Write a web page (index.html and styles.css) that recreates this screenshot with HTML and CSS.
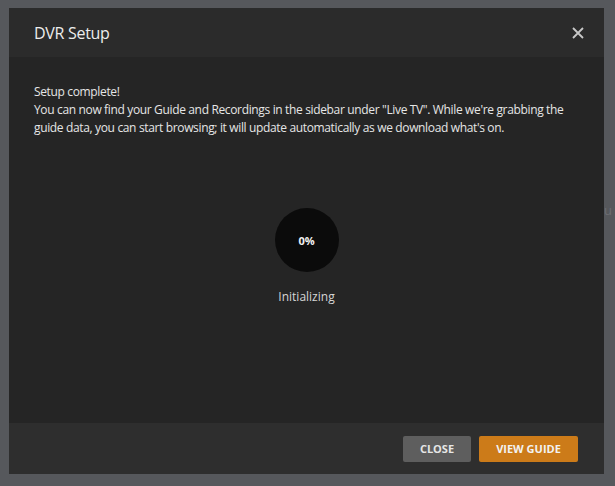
FILE: index.html
```html
<!DOCTYPE html>
<html>
<head>
<meta charset="utf-8">
<link rel="stylesheet" href="styles.css">
</head>
<body>
<div class="page">
  <span class="page-text">You</span>
</div>
<div class="overlay">
  <div class="modal">
    <div class="modal-header">
      <h1 class="modal-title">DVR Setup</h1>
      <button class="close-x" aria-label="Close">
        <svg width="12" height="12" viewBox="0 0 12 12"><path d="M1 1L11 11M11 1L1 11" stroke="#c8c8c8" stroke-width="1.8" fill="none"/></svg>
      </button>
    </div>
    <div class="modal-body">
      <p class="message">Setup complete!<br>You can now find your Guide and Recordings in the sidebar under "Live TV". While we're grabbing the guide data, you can start browsing; it will update automatically as we download what's on.</p>
      <div class="progress">
        <div class="progress-circle">0%</div>
        <div class="progress-label">Initializing</div>
      </div>
    </div>
    <div class="modal-footer">
      <button class="btn btn-secondary">CLOSE</button>
      <button class="btn btn-primary">VIEW GUIDE</button>
    </div>
  </div>
</div>
</body>
</html>
```
FILE: styles.css
```css
html, body {
  margin: 0;
  padding: 0;
  width: 615px;
  height: 486px;
  overflow: hidden;
  background: #56585c;
  font-family: "Open Sans", "Liberation Sans", sans-serif;
}
.page {
  width: 615px;
  height: 486px;
  position: relative;
}
.page-text {
  position: absolute;
  left: 589px;
  top: 201px;
  font-size: 13px;
  color: #6c6e72;
}
.overlay {
  position: absolute;
  left: 0;
  top: 0;
  width: 615px;
  height: 486px;
  padding: 8px 11px 12px 9px;
  box-sizing: border-box;
}
.modal {
  width: 595px;
  height: 466px;
  display: flex;
  flex-direction: column;
  background: #252525;
}
.modal-header {
  height: 49px;
  flex: none;
  background: #2b2b2b;
  display: flex;
  align-items: center;
  justify-content: space-between;
  padding: 0 20px 0 25px;
}
.modal-title {
  margin: 0;
  font-size: 16px;
  font-weight: 500;
  letter-spacing: -0.3px;
  color: #ededed;
  line-height: 1;
  padding-top: 1px;
}
.close-x {
  background: none;
  border: 0;
  padding: 0;
  width: 12px;
  height: 12px;
  display: flex;
  margin-top: 1px;
}
.modal-body {
  flex: 1;
  padding: 26px 25px 0 25px;
  display: flex;
  flex-direction: column;
}
.message {
  margin: 0;
  font-size: 12px;
  letter-spacing: -0.35px;
  line-height: 18px;
  color: #e6e6e6;
}
.progress {
  margin-top: 71px;
  display: flex;
  flex-direction: column;
  align-items: center;
}
.progress-circle {
  width: 64px;
  height: 64px;
  border-radius: 50%;
  background: #0b0b0b;
  color: #f2f2f2;
  font-size: 11px;
  font-weight: 700;
  display: flex;
  align-items: center;
  justify-content: center;
}
.progress-label {
  margin-top: 16px;
  font-size: 12px;
  color: #d6d6d6;
}
.modal-footer {
  height: 51px;
  flex: none;
  background: #2e2e2e;
  display: flex;
  align-items: center;
  justify-content: flex-end;
  gap: 8px;
  padding: 0 26px 0 0;
}
.btn {
  height: 26px;
  border: 0;
  border-radius: 2px;
  font-family: "Open Sans", "Liberation Sans", sans-serif;
  font-size: 11px;
  font-weight: 700;
  color: #f2f2f2;
  padding: 0;
}
.btn-secondary {
  width: 68px;
  background: #5e5e5e;
  color: #e6e6e6;
}
.btn-primary {
  width: 99px;
  background: #cc7b19;
}
```
